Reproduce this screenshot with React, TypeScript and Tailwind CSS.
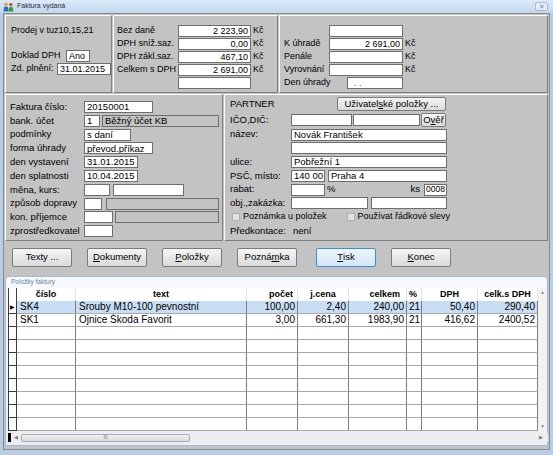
import type { ReactNode } from "react"

const RAISED = "border border-t-white border-l-white border-r-[#7f7f7f] border-b-[#7f7f7f]"

function Field({ className = "", children, right = false, gray = false, tight = false }: { className?: string; children?: ReactNode; right?: boolean; gray?: boolean; tight?: boolean }) {
  return (
    <div className={`h-[12px] shrink-0 flex items-center overflow-hidden whitespace-nowrap border border-[#6e6e6e] leading-none ${tight ? "px-0 justify-center" : "px-[2px]"} ${gray ? "bg-[#c3c3c3]" : "bg-white"} ${right ? "justify-end" : ""} ${className}`}>
      {children}
    </div>
  )
}

function Btn({ className = "", children, focus = false }: { className?: string; children: ReactNode; focus?: boolean }) {
  return (
    <div className={`shrink-0 flex items-center justify-center rounded-[2px] border ${focus ? "border-[#3d8ee0] bg-gradient-to-b from-[#eef6fd] to-[#d3e6f7]" : "border-[#7a7a7a] bg-gradient-to-b from-[#f5f5f5] to-[#dadada]"} ${className}`}>
      {children}
    </div>
  )
}

function Row({ label, w, children }: { label: string; w: string; children?: ReactNode }) {
  return (
    <div className="h-[12px] flex items-center">
      <span className={`${w} shrink-0 whitespace-nowrap`}>{label}</span>
      {children}
    </div>
  )
}

function Check({ label }: { label: string }) {
  return (
    <div className="flex items-center gap-[3px]">
      <div className="w-[8px] h-[8px] border border-[#b0b0b0] bg-[#e2e2e2]" />
      <span>{label}</span>
    </div>
  )
}

function AppIcon() {
  return (
    <svg width="11" height="10" viewBox="0 0 11 10">
      <circle cx="3" cy="2.2" r="1.8" fill="#e0a040" />
      <path d="M0.5 9.5 L1 5 Q3 3.8 5 5 L5.5 9.5 Z" fill="#2f6fc0" />
      <circle cx="7.8" cy="2.6" r="1.7" fill="#c84a2a" />
      <path d="M5.5 9.5 L6 5.4 Q7.8 4.3 9.8 5.4 L10.5 9.5 Z" fill="#3e9a3e" />
    </svg>
  )
}

const COLS = "grid-cols-[9px_59px_171px_51px_51px_58px_15px_56px_60px]"

const HEAD = [
  { t: "", a: "" },
  { t: "číslo", a: "text-center" },
  { t: "text", a: "text-center" },
  { t: "počet", a: "text-right pr-[4px]" },
  { t: "j.cena", a: "text-center" },
  { t: "celkem", a: "text-right pr-[6px]" },
  { t: "%", a: "text-left pl-[2px]" },
  { t: "DPH", a: "text-center" },
  { t: "celk.s DPH", a: "text-center" },
]

const ITEMS = [
  ["SK4", "Šrouby M10-100 pevnostní", "100,00", "2,40", "240,00", "21", "50,40", "290,40"],
  ["SK1", "Ojnice Škoda Favorit", "3,00", "661,30", "1983,90", "21", "416,62", "2400,52"],
]

const ALIGN = ["text-left pl-[3px]", "text-left pl-[3px]", "text-right pr-[2px]", "text-right pr-[2px]", "text-right pr-[2px]", "text-left pl-[2px]", "text-right pr-[2px]", "text-right pr-[2px]"]

export default function App() {
  const rows = [...ITEMS, ...Array.from({ length: 8 }, () => ["", "", "", "", "", "", "", ""])]

  return (
    <div className="w-[553px] h-[455px] overflow-hidden bg-[#b8cee6] font-['Liberation_Sans',Arial,sans-serif] text-[9px] text-black">
      {/* Title bar */}
      <div className="h-[13px] flex items-center bg-gradient-to-b from-[#dce9f7] to-[#c3d7ee] pl-[3px]">
        <AppIcon />
        <span className="ml-[3px] text-[7px] text-[#1e2a3a]">Faktura vydaná</span>
        <div className="ml-auto mr-[5px] w-[13px] h-[9px] rounded-[2px] border border-[#a8bcd4] bg-[#e4edf7] flex items-center justify-center text-[7px] leading-none text-[#7a8ca2]">
          ✕
        </div>
      </div>

      {/* Window body */}
      <div className="mx-[3px] h-[437px] border border-[#8a8a8a] bg-[#c3c3c3] px-[1px] pt-[1px]">
        {/* Top summary */}
        <div className="h-[78px] flex gap-[1px]">
          <div className={`${RAISED} w-[107px] pl-[5px] pt-[9px]`}>
            <div className="h-[12px] flex items-center">Prodej v tuz10,15,21</div>
            <div className="mt-[13px] flex flex-col gap-[1px]">
              <Row label="Doklad DPH" w="w-[55px]">
                <Field className="w-[24px]">Ano</Field>
              </Row>
              <Row label="Zd. plnění:" w="w-[46px]">
                <Field className="w-[54px]">31.01.2015</Field>
              </Row>
            </div>
          </div>

          <div className={`${RAISED} w-[165px] pl-[3px] pt-[9px] flex flex-col gap-[1px]`}>
            {[
              ["Bez daně", "2 223,90"],
              ["DPH sníž.saz.", "0,00"],
              ["DPH zákl.saz.", "467,10"],
              ["Celkem s DPH", "2 691,00"],
            ].map(([l, v]) => (
              <Row key={l} label={l} w="w-[61px]">
                <Field className="w-[73px]" right>{v}</Field>
                <span className="ml-[2px]">Kč</span>
              </Row>
            ))}
            <Row label="" w="w-[61px]">
              <Field className="w-[73px]" />
            </Row>
          </div>

          <div className={`${RAISED} flex-1 pl-[4px] pt-[9px] flex flex-col gap-[1px]`}>
            <Row label="" w="w-[45px]">
              <Field className="w-[74px]" />
            </Row>
            <Row label="K úhradě" w="w-[45px]">
              <Field className="w-[74px]" right>2 691,00</Field>
              <span className="ml-[2px]">Kč</span>
            </Row>
            <Row label="Penále" w="w-[45px]">
              <Field className="w-[74px]" />
              <span className="ml-[2px]">Kč</span>
            </Row>
            <Row label="Vyrovnání" w="w-[45px]">
              <Field className="w-[74px]" />
              <span className="ml-[2px]">Kč</span>
            </Row>
            <Row label="Den úhrady" w="w-[63px]">
              <Field className="w-[56px] pl-[6px] text-[#555]">. .</Field>
            </Row>
          </div>
        </div>

        {/* Invoice + partner */}
        <div className="mt-[1px] h-[147px] flex gap-[1px] text-[9.5px]">
          <div className={`${RAISED} w-[218px] pl-[4px] pt-[6px] flex flex-col gap-[1.8px]`}>
            <Row label="Faktura číslo:" w="w-[74px]">
              <Field className="w-[69px]">20150001</Field>
            </Row>
            <Row label="bank. účet" w="w-[74px]">
              <Field className="w-[16px]">1</Field>
              <Field className="ml-[2px] w-[117px]" gray>Běžný účet KB</Field>
            </Row>
            <Row label="podmínky" w="w-[74px]">
              <Field className="w-[47px]">s daní</Field>
            </Row>
            <Row label="forma úhrady" w="w-[74px]">
              <Field className="w-[69px]">převod.příkaz</Field>
            </Row>
            <Row label="den vystavení" w="w-[74px]">
              <Field className="w-[54px]">31.01.2015</Field>
            </Row>
            <Row label="den splatnosti" w="w-[74px]">
              <Field className="w-[54px]">10.04.2015</Field>
            </Row>
            <Row label="měna, kurs:" w="w-[74px]">
              <Field className="w-[26px]" />
              <Field className="ml-[3px] w-[71px]" />
            </Row>
            <Row label="způsob dopravy" w="w-[74px]">
              <Field className="w-[18px]" />
              <Field className="ml-[4px] w-[113px]" gray />
            </Row>
            <Row label="kon. příjemce" w="w-[74px]">
              <Field className="w-[29px]" />
              <Field className="ml-[2px] w-[104px]" gray />
            </Row>
            <Row label="zprostředkovatel" w="w-[74px]">
              <Field className="w-[29px]" />
            </Row>
          </div>

          <div className={`${RAISED} flex-1 pl-[5px] pt-[2px] flex flex-col gap-[1.75px]`}>
            <div className="h-[14px] flex items-center">
              <span className="w-[107px] shrink-0">PARTNER</span>
              <Btn className="w-[109px] h-[14px]">
                Uživatel<span className="underline">s</span>ké položky ...
              </Btn>
            </div>
            <div className="h-[14px] flex items-center">
              <span className="w-[61px] shrink-0">IČO,DIČ:</span>
              <Field className="w-[61px]" />
              <Field className="ml-[1px] w-[67px]" />
              <Btn className="ml-[1px] w-[25px] h-[14px]">
                O<span className="underline">v</span>ěř
              </Btn>
            </div>
            <Row label="název:" w="w-[61px]">
              <Field className="w-[156px]">Novák František</Field>
            </Row>
            <Row label="" w="w-[61px]">
              <Field className="w-[156px]" />
            </Row>
            <Row label="ulice:" w="w-[61px]">
              <Field className="w-[156px]">Pobřežní 1</Field>
            </Row>
            <Row label="PSČ, místo:" w="w-[61px]">
              <Field className="w-[34px]">140 00</Field>
              <Field className="ml-[3px] w-[119px]">Praha 4</Field>
            </Row>
            <Row label="rabat:" w="w-[61px]">
              <Field className="w-[34px]" />
              <span className="ml-[2px]">%</span>
              <span className="ml-auto mr-[4px]">ks</span>
              <Field className="w-[23px] mr-[100px] text-[8.5px]" tight>0008</Field>
            </Row>
            <Row label="obj.,zakázka:" w="w-[61px]">
              <Field className="w-[77px]" />
              <Field className="ml-[3px] w-[76px]" />
            </Row>
            <div className="h-[12px] flex items-center pl-[2px] gap-[20px] text-[9px]">
              <Check label="Poznámka u položek" />
              <Check label="Používat řádkové slevy" />
            </div>
            <div className="h-[12px] flex items-center">
              <span className="w-[63px] shrink-0">Předkontace:</span>
              <span>není</span>
            </div>
          </div>
        </div>

        {/* Buttons */}
        <div className="mt-[7px] h-[19px] flex pl-[7px] gap-[15px] text-[9.5px]">
          <Btn className="w-[60px] h-[19px]">Texty ...</Btn>
          <Btn className="w-[60px] h-[19px]">
            <span className="underline">D</span>okumenty
          </Btn>
          <Btn className="w-[60px] h-[19px]">
            <span className="underline">P</span>oložky
          </Btn>
          <Btn className="w-[60px] h-[19px]">
            Pozná<span className="underline">m</span>ka
          </Btn>
          <Btn className="ml-[4px] w-[60px] h-[19px]" focus>
            <span className="underline">T</span>isk
          </Btn>
          <Btn className="w-[60px] h-[19px]">
            <span className="underline">K</span>onec
          </Btn>
        </div>

        {/* Items group */}
        <div className="mt-[9px] h-[170px] rounded-t-[4px] border border-[#a7bcd3] bg-gradient-to-b from-[#f6f9fd] to-[#e7eef6] pl-[2px]">
          <div className="h-[11px] pl-[3px] pt-[2px] text-[6.5px] leading-none text-[#6c819c]">Položky faktury</div>
          <div className="flex">
            <div className="w-[530px]">
              <div className={`grid ${COLS} h-[13px] bg-white font-bold text-[9px]`}>
                {HEAD.map((h, i) => (
                  <div key={i} className={`leading-[13px] whitespace-nowrap border-r border-[#e2e2e2] ${i === 0 ? "border-l border-l-[#404040] border-r-[#404040]" : ""} ${h.a}`}>
                    {h.t}
                  </div>
                ))}
              </div>
              {rows.map((r, ri) => (
                <div key={ri} className={`grid ${COLS} h-[13px] text-[10px] ${ri === 0 ? "bg-[#c8def5]" : "bg-white"}`}>
                  <div className="border-l border-r border-b border-[#3a3a3a] bg-white flex items-center justify-center text-[6px] leading-none">
                    {ri === 0 ? "▶" : ""}
                  </div>
                  {r.map((c, ci) => (
                    <div key={ci} className={`leading-[12px] whitespace-nowrap overflow-hidden border-r border-r-[#7d7d7d] border-b border-b-[#a9a9a9] ${ALIGN[ci]}`}>
                      {c}
                    </div>
                  ))}
                </div>
              ))}
            </div>
            <div className="w-[10px] h-[143px] bg-[#f2f2f2] flex flex-col items-center justify-between py-[2px] text-[5px] leading-none text-[#8a8a8a]">
              <span>▲</span>
              <span>▼</span>
            </div>
          </div>
          <div className="mt-[2px] h-[9px] w-[540px] flex items-center bg-[#ededed]">
            <div className="w-[3px] h-[9px] bg-black" />
            <span className="ml-[3px] text-[5px] text-[#777]">◀</span>
            <div className="ml-[3px] w-[169px] h-[8px] rounded-[2px] border border-[#acacac] bg-gradient-to-b from-[#f2f2f2] to-[#d9d9d9] flex items-center justify-center text-[5px] leading-none text-[#777]">
              III
            </div>
            <span className="ml-auto mr-[5px] text-[5px] text-[#777]">▶</span>
          </div>
        </div>
      </div>
    </div>
  )
}
